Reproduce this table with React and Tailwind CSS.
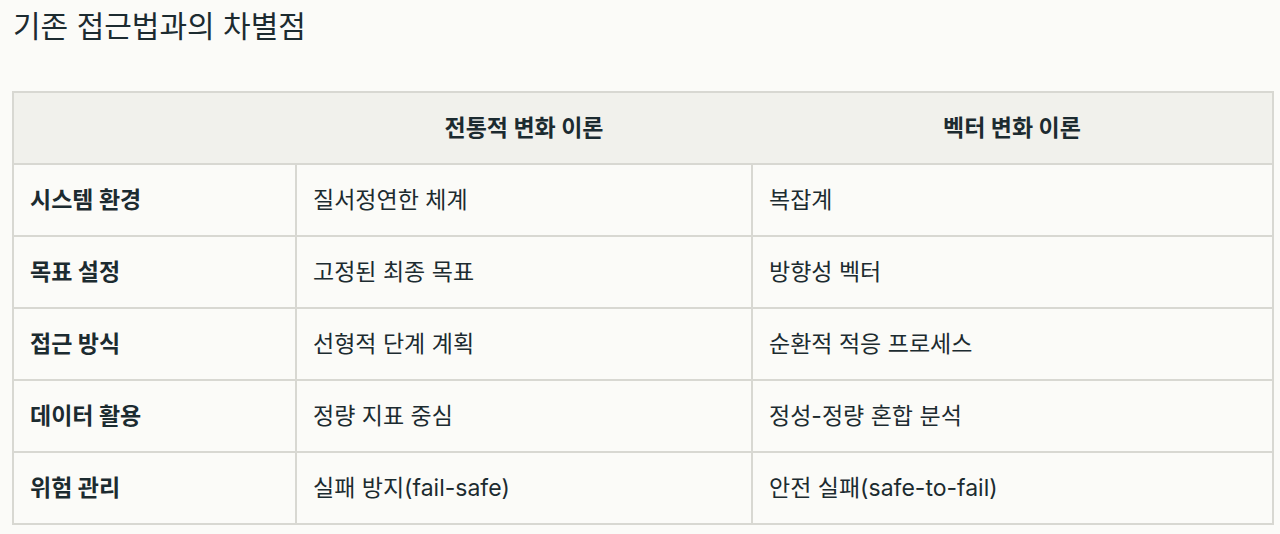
import React from 'react'

const rows = [
  ['시스템 환경', '질서정연한 체계', '복잡계'],
  ['목표 설정', '고정된 최종 목표', '방향성 벡터'],
  ['접근 방식', '선형적 단계 계획', '순환적 적응 프로세스'],
  ['데이터 활용', '정량 지표 중심', '정성-정량 혼합 분석'],
  ['위험 관리', '실패 방지(fail-safe)', '안전 실패(safe-to-fail)'],
]

const App = () => {
  return (
    <div
      className="min-h-[534px] bg-[#fbfbf8] text-[#1c2b30] px-3 pt-[6px]"
      style={{ fontFamily: 'Inter, "Noto Sans CJK KR", sans-serif' }}
    >
      <h2 className="text-[30px] leading-[40px] font-normal pl-px">기존 접근법과의 차별점</h2>
      <table className="mt-[45px] w-[1262px] border-collapse border-2 border-[#d8d8d2] table-fixed text-[23px]">
        <colgroup>
          <col className="w-[283px]" />
          <col className="w-[456px]" />
          <col />
        </colgroup>
        <thead>
          <tr className="bg-[#f1f1ec] h-[72px]">
            <th className="border-b-2 border-[#d8d8d2]"></th>
            <th className="border-b-2 border-[#d8d8d2] font-bold text-center">전통적 변화 이론</th>
            <th className="border-b-2 border-[#d8d8d2] font-bold text-center">벡터 변화 이론</th>
          </tr>
        </thead>
        <tbody>
          {rows.map((r, i) => (
            <tr key={i} className="h-[72px]">
              <td className="border-2 border-[#d8d8d2] px-4 font-bold">{r[0]}</td>
              <td className="border-2 border-[#d8d8d2] px-4">{r[1]}</td>
              <td className="border-2 border-[#d8d8d2] px-4">{r[2]}</td>
            </tr>
          ))}
        </tbody>
      </table>
    </div>
  )
}

export default App
